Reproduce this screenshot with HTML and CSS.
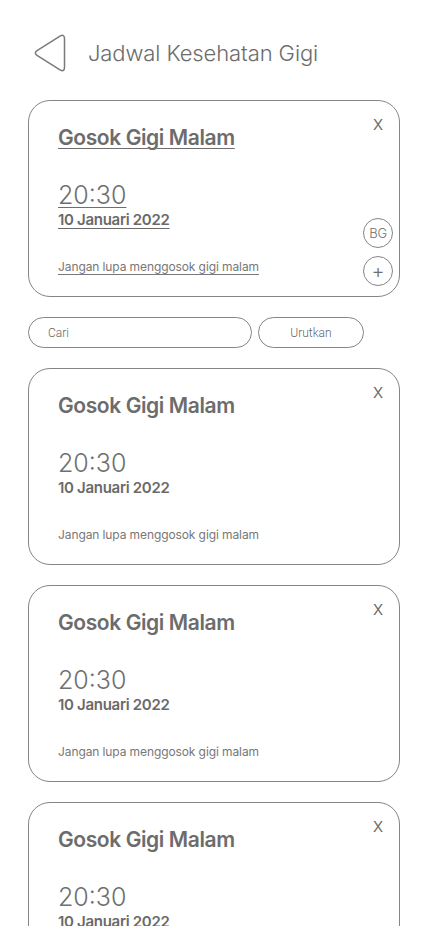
FILE: index.html
```html
<!DOCTYPE html>
<html lang="id">
<head>
<meta charset="utf-8">
<title>Jadwal Kesehatan Gigi</title>
<link rel="stylesheet" href="styles.css">
</head>
<body>
<div class="page">
  <header class="header">
    <button class="back" aria-label="Kembali">
      <svg width="34" height="42" viewBox="0 0 34 42" fill="none">
        <path d="M4 18.6 L27 4.2 Q31.5 1.6 31.5 6.8 L31.5 35.2 Q31.5 40.4 27 37.8 L4 23.4 Q0.6 21 4 18.6 Z" stroke="#7a7a7a" stroke-width="1.5" stroke-linejoin="round"/>
      </svg>
    </button>
    <h1 class="page-title">Jadwal Kesehatan Gigi</h1>
  </header>

  <article class="card card-active">
    <div class="card-main">
      <h2 class="card-title">Gosok Gigi Malam</h2>
      <p class="card-time">20:30</p>
      <p class="card-date">10 Januari 2022</p>
      <p class="card-note">Jangan lupa menggosok gigi malam</p>
    </div>
    <div class="card-side">
      <button class="close">x</button>
      <div class="actions">
        <button class="circle">BG</button>
        <button class="circle circle-plus">+</button>
      </div>
    </div>
  </article>

  <div class="toolbar">
    <div class="search">Cari</div>
    <button class="sort">Urutkan</button>
  </div>

  <div class="list">
    <article class="card">
      <div class="card-main">
        <h2 class="card-title">Gosok Gigi Malam</h2>
        <p class="card-time">20:30</p>
        <p class="card-date">10 Januari 2022</p>
        <p class="card-note">Jangan lupa menggosok gigi malam</p>
      </div>
      <div class="card-side">
        <button class="close">x</button>
      </div>
    </article>
    <article class="card">
      <div class="card-main">
        <h2 class="card-title">Gosok Gigi Malam</h2>
        <p class="card-time">20:30</p>
        <p class="card-date">10 Januari 2022</p>
        <p class="card-note">Jangan lupa menggosok gigi malam</p>
      </div>
      <div class="card-side">
        <button class="close">x</button>
      </div>
    </article>
    <article class="card">
      <div class="card-main">
        <h2 class="card-title">Gosok Gigi Malam</h2>
        <p class="card-time">20:30</p>
        <p class="card-date">10 Januari 2022</p>
        <p class="card-note">Jangan lupa menggosok gigi malam</p>
      </div>
      <div class="card-side">
        <button class="close">x</button>
      </div>
    </article>
  </div>
</div>
</body>
</html>
```

FILE: styles.css
```css
* { box-sizing: border-box; }

body {
  margin: 0;
  background: #ffffff;
  color: #6f6f6f;
  font-family: Inter, "Noto Sans", sans-serif;
}

.page {
  width: 428px;
  padding: 32px 28px 40px;
}

.header {
  display: flex;
  align-items: center;
  gap: 21px;
  height: 42px;
  padding-left: 5px;
}

.back {
  display: block;
  width: 34px;
  height: 42px;
  padding: 0;
  border: 0;
  background: none;
}

.back svg { display: block; }

.page-title {
  margin: 0;
  font-size: 22px;
  font-weight: 300;
  line-height: 26px;
  letter-spacing: -0.1px;
  color: #6c6c6c;
}

.card {
  display: flex;
  height: 197px;
  border: 1px solid #858585;
  border-radius: 22px;
  padding: 0 6px 10px 29px;
  background: #fff;
}

.card-active { margin-top: 26px; }

.card-main {
  flex: 1;
  display: flex;
  flex-direction: column;
  align-items: flex-start;
  padding-top: 24px;
}

.card-title {
  margin: 0;
  font-size: 21px;
  line-height: 25px;
  font-weight: 600;
  letter-spacing: -0.4px;
  color: #6c6c6c;
}

.card-time {
  margin: 32px 0 0;
  font-size: 25px;
  line-height: 26px;
  font-weight: 300;
  color: #6f6f6f;
}

.card-date {
  margin: 3px 0 0;
  font-size: 15px;
  line-height: 18px;
  font-weight: 600;
  letter-spacing: -0.3px;
  color: #6a6a6a;
}

.card-note {
  margin: 30px 0 0;
  font-size: 12px;
  line-height: 15px;
  font-weight: 400;
  letter-spacing: -0.1px;
  color: #777;
}

.card-active .card-title,
.card-active .card-time,
.card-active .card-date,
.card-active .card-note {
  text-decoration: underline;
  text-decoration-thickness: 1px;
  text-underline-offset: 3px;
}

.card-side {
  width: 30px;
  display: flex;
  flex-direction: column;
  justify-content: space-between;
  align-items: center;
  padding-top: 11px;
}

.close {
  padding: 0;
  border: 0;
  background: none;
  font-family: Inter, "Noto Sans", sans-serif;
  font-size: 20px;
  line-height: 22px;
  font-weight: 300;
  color: #6a6a6a;
}

.actions {
  display: flex;
  flex-direction: column;
  gap: 8px;
}

.circle {
  display: flex;
  align-items: center;
  justify-content: center;
  width: 30px;
  height: 30px;
  padding: 0;
  border: 1px solid #858585;
  border-radius: 50%;
  background: #fff;
  font-family: Inter, "Noto Sans", sans-serif;
  font-size: 13px;
  font-weight: 300;
  letter-spacing: -0.3px;
  color: #6f6f6f;
}

.circle-plus {
  font-size: 20px;
  font-weight: 300;
}

.toolbar {
  display: flex;
  gap: 6px;
  margin-top: 20px;
}

.search {
  width: 224px;
  height: 31px;
  border: 1px solid #858585;
  border-radius: 16px;
  padding-left: 19px;
  display: flex;
  align-items: center;
  font-family: Roboto, "Noto Sans", sans-serif;
  font-size: 12px;
  font-weight: 300;
  color: #666;
}

.sort {
  width: 106px;
  height: 31px;
  border: 1px solid #858585;
  border-radius: 16px;
  background: #fff;
  padding: 0;
  font-family: Roboto, "Noto Sans", sans-serif;
  font-size: 12px;
  font-weight: 300;
  color: #666;
}

.list {
  display: flex;
  flex-direction: column;
  gap: 20px;
  margin-top: 20px;
}
```
